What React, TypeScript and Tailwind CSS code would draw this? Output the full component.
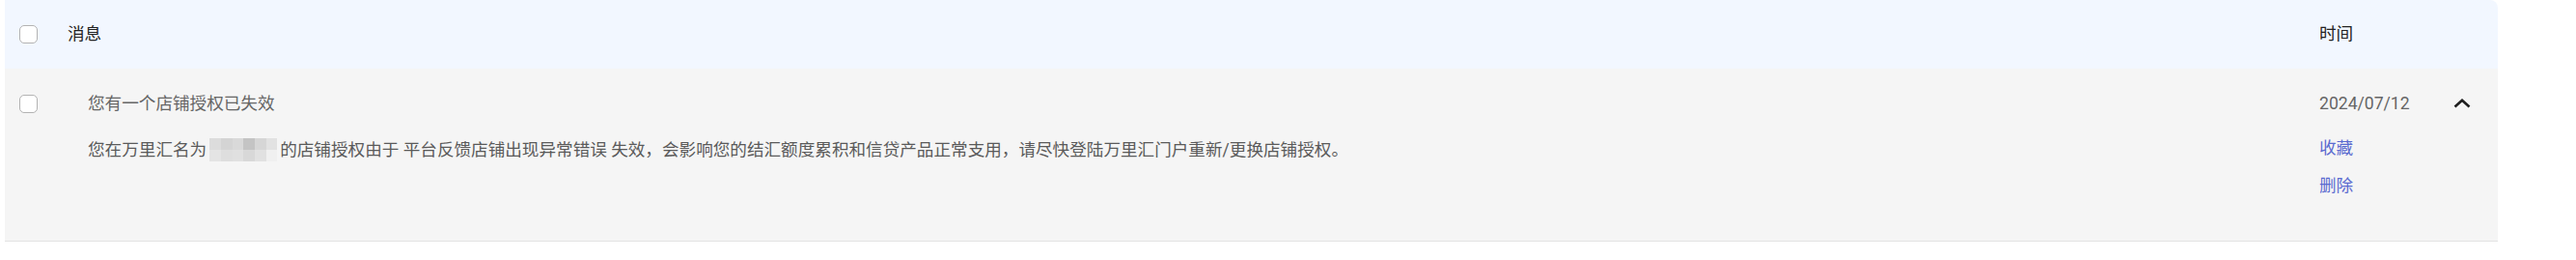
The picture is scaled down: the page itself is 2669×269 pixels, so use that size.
import { useState } from 'react';

const Checkbox = ({ checked, onChange }: { checked: boolean; onChange: () => void }) => (
  <button
    type="button"
    onClick={onChange}
    className={`w-[19px] h-[19px] rounded-[5px] border bg-white ${checked ? 'border-[#5b6bd0] bg-[#5b6bd0]' : 'border-[#b3b3b3]'}`}
  />
);

const Mosaic = () => (
  <span className="inline-grid grid-cols-6 grid-rows-2 w-[70px] h-[24px] align-middle mx-[3px] -mt-[2px]">
    <span className="bg-[#dcdcdc]" />
    <span className="bg-[#d4d4d4]" />
    <span className="bg-[#d9d9d9]" />
    <span className="bg-[#c4c4c4]" />
    <span className="bg-[#d6d6d6]" />
    <span className="bg-[#e2e2e2]" />
    <span className="bg-[#e4e4e4]" />
    <span className="bg-[#dedede]" />
    <span className="bg-[#e0e0e0]" />
    <span className="bg-[#d8d8d8]" />
    <span className="bg-[#e1e1e1]" />
    <span className="bg-[#f0f0f0]" />
  </span>
);

const App = () => {
  const [all, setAll] = useState(false);
  const [row, setRow] = useState(false);
  const [open, setOpen] = useState(true);

  return (
    <div
      className="w-[2669px] h-[269px] bg-white pl-[5px] pr-[81px]"
      style={{ fontFamily: 'Roboto, "Noto Sans CJK SC", sans-serif' }}
    >
      {/* Header */}
      <div className="flex items-center h-[71px] bg-[#f2f7ff] rounded-tr-[8px] text-[17.6px] text-[#222]">
        <div className="w-[65px] pl-[15px] flex items-center">
          <Checkbox checked={all} onChange={() => setAll(!all)} />
        </div>
        <div className="flex-1">消息</div>
        <div className="w-[185px]">时间</div>
      </div>

      {/* Row */}
      <div className="flex h-[179px] bg-[#f5f5f5] border-b border-[#e3e3e3] text-[17.6px] text-[#666]">
        <div className="w-[65px] pl-[15px] pt-[26px]">
          <Checkbox checked={row} onChange={() => setRow(!row)} />
        </div>
        <div className="flex-1 pl-[21px] pt-[23px]">
          <div className="leading-[26px]">您有一个店铺授权已失效</div>
          {open && (
            <div className="leading-[26px] mt-[22px] text-[#5a5a5a]">
              您在万里汇名为<Mosaic />的店铺授权由于 平台反馈店铺出现异常错误 失效，会影响您的结汇额度累积和信贷产品正常支用，请尽快登陆万里汇门户重新/更换店铺授权。
            </div>
          )}
        </div>
        <div className="w-[185px] pt-[23px]">
          <div className="flex items-center h-[26px]">
            <span className="w-[139px]">2024/07/12</span>
            <button type="button" onClick={() => setOpen(!open)} className="w-[18px] h-[10px] flex items-center">
              <svg width="18" height="10" viewBox="0 0 18 10" fill="none">
                <path d="M1.5 8.5 L9 1.8 L16.5 8.5" stroke="#1f1f1f" strokeWidth="2.6" />
              </svg>
            </button>
          </div>
          {open && (
            <div className="flex flex-col text-[#5b6bd0]">
              <span className="leading-[26px] mt-[20px]">收藏</span>
              <span className="leading-[26px] mt-[13px]">删除</span>
            </div>
          )}
        </div>
      </div>
    </div>
  );
};

export default App;
